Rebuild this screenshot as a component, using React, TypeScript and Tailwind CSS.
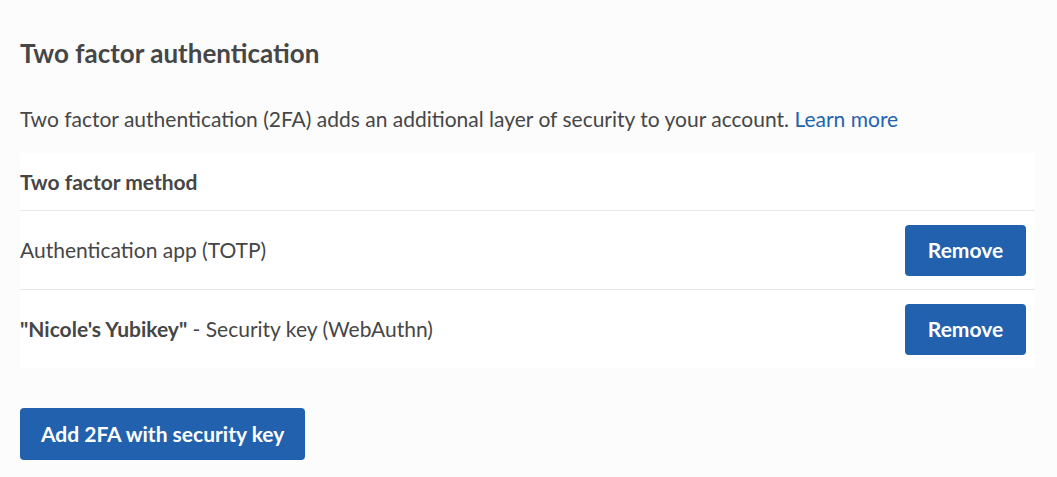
export default function App() {
  return (
    <div className="min-h-screen bg-[#fcfcfc] px-5 pt-[35px] text-[#464646]" style={{ fontFamily: "Lato, 'Open Sans', sans-serif" }}>
      <h2 className="text-[26px] font-bold leading-[36px]">Two factor authentication</h2>
      <p className="mt-[34px] text-[21px] leading-[28px]">
        Two factor authentication (2FA) adds an additional layer of security to your account.{" "}
        <a href="#" className="text-[#2263b0]">Learn more</a>
      </p>
      <div className="mt-[20px] mr-[2px] bg-white">
        <div className="flex h-[58px] items-center border-b border-[#e8e8e8] text-[21px] font-bold">Two factor method</div>
        <div className="flex h-[79px] items-center justify-between border-b border-[#e8e8e8] text-[21px]">
          <span>Authentication app (TOTP)</span>
          <button className="mr-[9px] h-[51px] w-[121px] rounded-[4px] bg-[#2261ae] text-[21px] font-bold text-white">Remove</button>
        </div>
        <div className="flex h-[78px] items-center justify-between text-[21px]">
          <span>
            <b>"Nicole's Yubikey"</b> - Security key (WebAuthn)
          </span>
          <button className="mr-[9px] h-[51px] w-[121px] rounded-[4px] bg-[#2261ae] text-[21px] font-bold text-white">Remove</button>
        </div>
      </div>
      <button className="mt-[40px] h-[52px] rounded-[4px] bg-[#2261ae] px-[21px] text-[21px] font-bold text-white">Add 2FA with security key</button>
    </div>
  );
}
